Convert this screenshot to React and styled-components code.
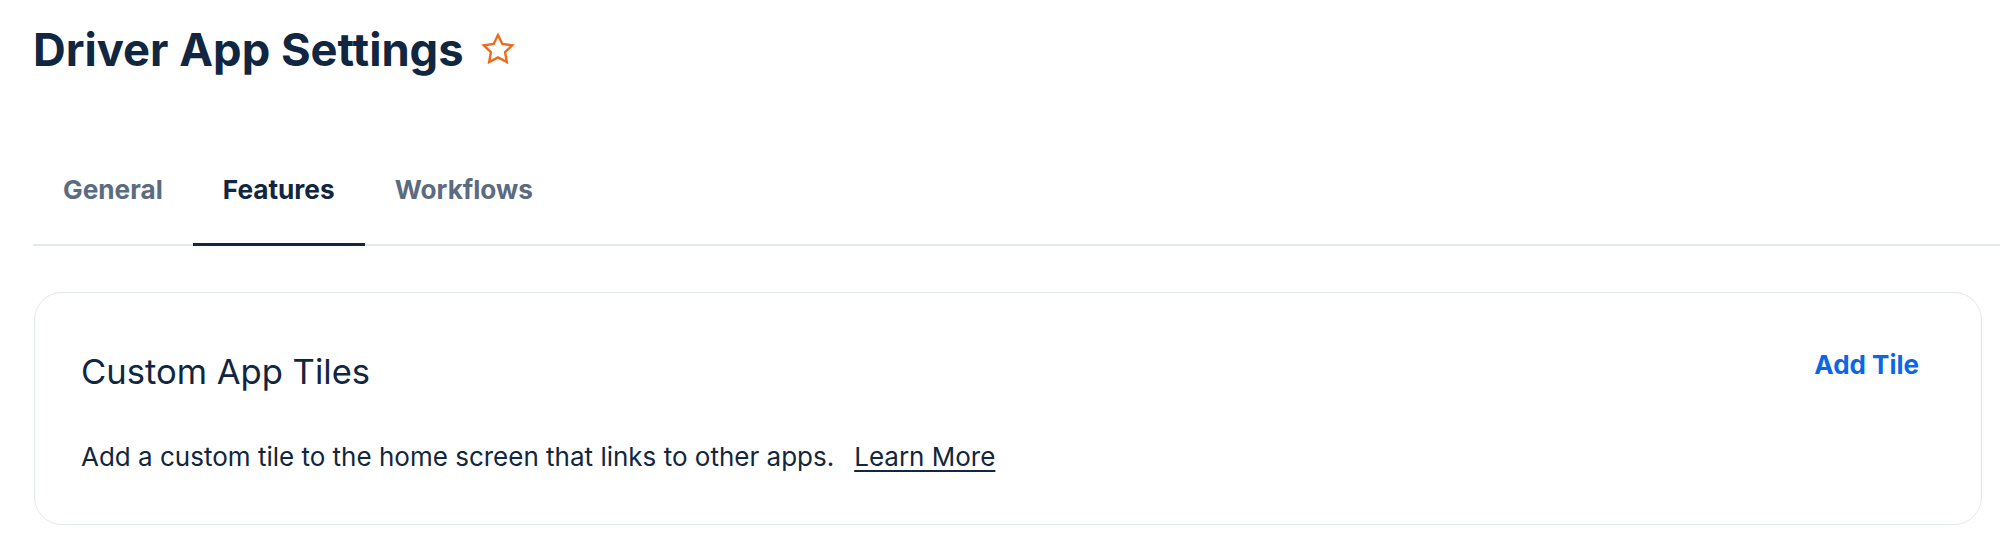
import React from "react";
import styled, { createGlobalStyle } from "styled-components";

const GlobalStyle = createGlobalStyle`
  html, body {
    margin: 0;
    padding: 0;
    background: #ffffff;
  }
  body {
    font-family: Inter, "Noto Sans", sans-serif;
    color: #112640;
  }
`;

const Page = styled.div`
  padding: 24px 0 24px 33px;
  display: flex;
  flex-direction: column;
`;

const TitleRow = styled.div`
  display: flex;
  align-items: center;
  gap: 16px;
`;

const Title = styled.h1`
  margin: 0;
  font-size: 45.3px;
  line-height: 52px;
  font-weight: 700;
  color: #112640;
`;

const FavButton = styled.button`
  display: flex;
  align-items: center;
  justify-content: center;
  background: none;
  border: none;
  padding: 0;
  margin-top: -2px;
  cursor: pointer;
`;

const TabList = styled.div`
  display: flex;
  margin-top: 82px;
  border-bottom: 2px solid #e3e8ee;
`;

const Tab = styled.button`
  background: none;
  border: none;
  border-bottom: 3px solid ${(p) => (p.$active ? "#112640" : "transparent")};
  margin-bottom: -2px;
  padding: 16px 30px 37px;
  font-family: Inter, "Noto Sans", sans-serif;
  font-size: 26.2px;
  line-height: 32px;
  font-weight: 700;
  color: ${(p) => (p.$active ? "#112640" : "#5b6b81")};
  cursor: pointer;
`;

const Card = styled.section`
  margin: 46px 18px 0 1px;
  border: 1px solid #e3e8ee;
  border-radius: 28px;
  padding: 56px 46px 51px;
  display: flex;
  flex-direction: column;
  gap: 49px;
`;

const CardHeader = styled.div`
  display: flex;
  align-items: flex-start;
  justify-content: space-between;
`;

const CardTitle = styled.h2`
  margin: 0;
  padding-top: 1px;
  font-size: 34.6px;
  line-height: 42px;
  font-weight: 400;
  color: #112640;
`;

const LinkButton = styled.button`
  background: none;
  border: none;
  padding: 0 16px;
  font-family: Inter, "Noto Sans", sans-serif;
  font-size: 26px;
  line-height: 32px;
  font-weight: 700;
  color: #0b67e6;
  cursor: pointer;
`;

const Description = styled.p`
  margin: 0;
  font-size: 26px;
  line-height: 32px;
  color: #112640;
`;

const LearnMore = styled.a`
  margin-left: 20px;
  color: #112640;
  text-decoration: underline;
  text-underline-offset: 4px;
  text-decoration-thickness: 2px;
`;

const StarIcon = () => (
  <svg width="36" height="36" viewBox="0 0 24 24" fill="none">
    <polygon
      points="12,2.6 14.9,8.6 21.5,9.5 16.7,14.1 17.9,20.7 12,17.6 6.1,20.7 7.3,14.1 2.5,9.5 9.1,8.6"
      stroke="#f06a1c"
      strokeWidth="1.6"
      strokeLinejoin="miter"
    />
  </svg>
);

export default function App() {
  return (
    <>
      <GlobalStyle />
      <Page>
        <TitleRow>
          <Title>Driver App Settings</Title>
          <FavButton aria-label="Favorite">
            <StarIcon />
          </FavButton>
        </TitleRow>
        <TabList>
          <Tab>General</Tab>
          <Tab $active>Features</Tab>
          <Tab>Workflows</Tab>
        </TabList>
        <Card>
          <CardHeader>
            <CardTitle>Custom App Tiles</CardTitle>
            <LinkButton>Add Tile</LinkButton>
          </CardHeader>
          <Description>
            Add a custom tile to the home screen that links to other apps.
            <LearnMore href="#">Learn More</LearnMore>
          </Description>
        </Card>
      </Page>
    </>
  );
}
